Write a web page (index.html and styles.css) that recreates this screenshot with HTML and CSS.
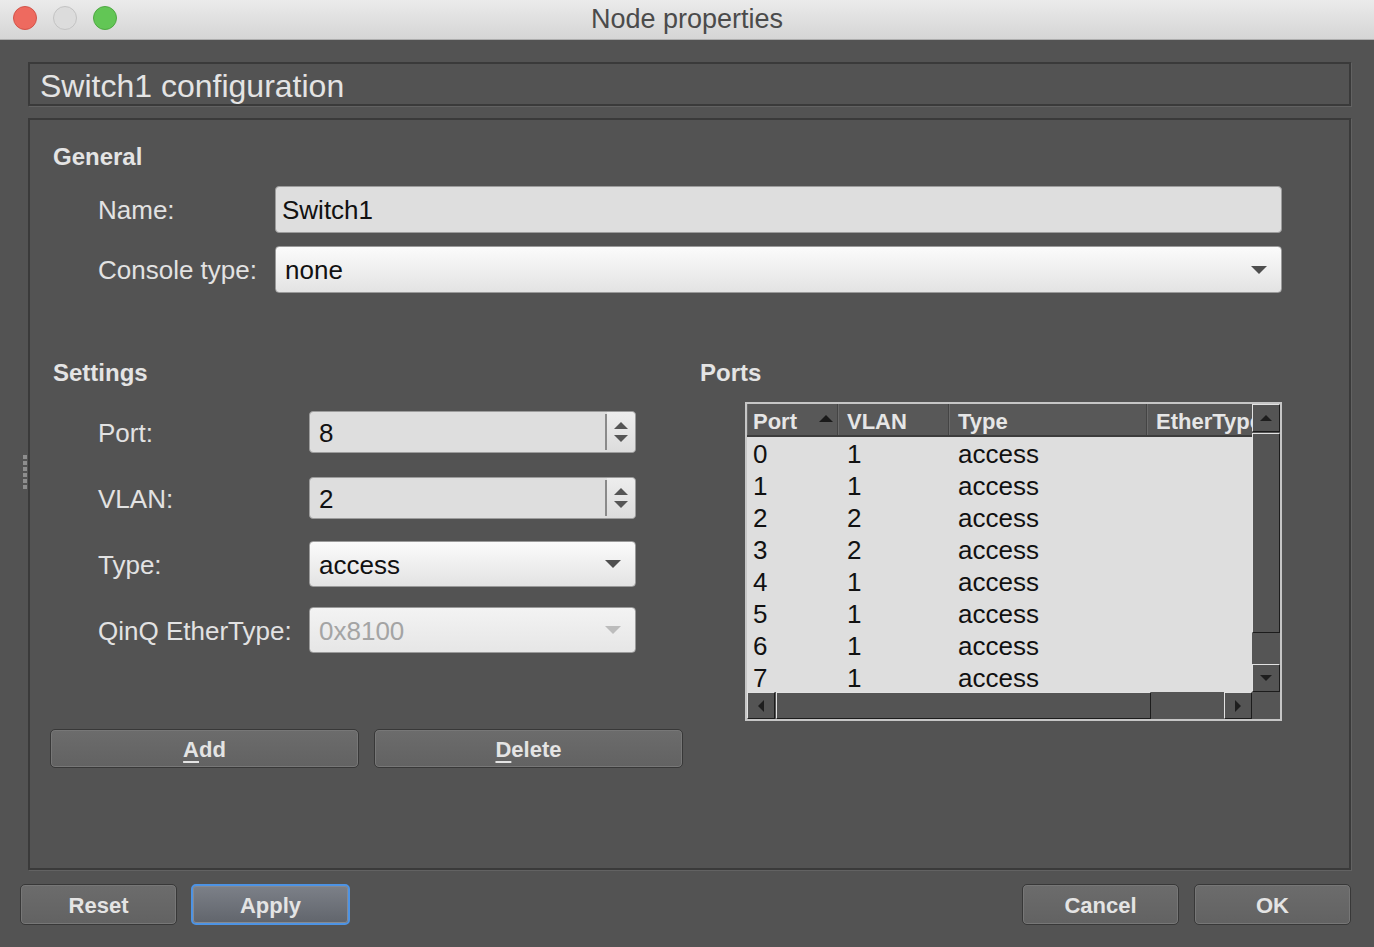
FILE: index.html
```html
<!DOCTYPE html>
<html>
<head>
<meta charset="utf-8">
<title>Node properties</title>
<link rel="stylesheet" href="styles.css">
</head>
<body>
<div class="window">
  <div class="titlebar">
    <div class="lights">
      <span class="light red"></span>
      <span class="light gray"></span>
      <span class="light green"></span>
    </div>
    <div class="wintitle">Node properties</div>
  </div>

  <div class="content">
    <div class="header">Switch1 configuration</div>

    <div class="mainbox">
      <span class="grip"></span>
      <div class="section-title">General</div>
      <div class="form-row general-row">
        <label class="lbl lbl-general">Name:</label>
        <div class="textfield wide">Switch1</div>
      </div>
      <div class="form-row general-row second">
        <label class="lbl lbl-general">Console type:</label>
        <div class="combo wide tall47"><span>none</span><i class="caret"></i></div>
      </div>

      <div class="settings">
        <div class="left-col">
          <div class="section-title">Settings</div>
          <div class="form-row s-row r-port">
            <label class="lbl lbl-set">Port:</label>
            <div class="spin"><span class="spin-val">8</span><span class="spin-btns"><i class="up"></i><i class="down"></i></span></div>
          </div>
          <div class="form-row s-row r-vlan">
            <label class="lbl lbl-set">VLAN:</label>
            <div class="spin"><span class="spin-val">2</span><span class="spin-btns"><i class="up"></i><i class="down"></i></span></div>
          </div>
          <div class="form-row s-row r-type">
            <label class="lbl lbl-set">Type:</label>
            <div class="combo small"><span>access</span><i class="caret"></i></div>
          </div>
          <div class="form-row s-row r-qinq">
            <label class="lbl lbl-set">QinQ EtherType:</label>
            <div class="combo small disabled"><span>0x8100</span><i class="caret"></i></div>
          </div>
          <div class="btn-row">
            <button class="btn wide-btn"><u>A</u>dd</button>
            <button class="btn wide-btn"><u>D</u>elete</button>
          </div>
        </div>

        <div class="right-col">
          <div class="section-title">Ports</div>
          <div class="table">
            <div class="tview">
              <div class="tmain">
                <div class="thead">
                  <div class="th c-port">Port<i class="sort"></i></div>
                  <div class="th c-vlan">VLAN</div>
                  <div class="th c-type">Type</div>
                  <div class="th c-eth">EtherType</div>
                </div>
                <div class="tbody">
                  <div class="tr"><span class="c-port">0</span><span class="c-vlan">1</span><span class="c-type">access</span></div>
                  <div class="tr"><span class="c-port">1</span><span class="c-vlan">1</span><span class="c-type">access</span></div>
                  <div class="tr"><span class="c-port">2</span><span class="c-vlan">2</span><span class="c-type">access</span></div>
                  <div class="tr"><span class="c-port">3</span><span class="c-vlan">2</span><span class="c-type">access</span></div>
                  <div class="tr"><span class="c-port">4</span><span class="c-vlan">1</span><span class="c-type">access</span></div>
                  <div class="tr"><span class="c-port">5</span><span class="c-vlan">1</span><span class="c-type">access</span></div>
                  <div class="tr"><span class="c-port">6</span><span class="c-vlan">1</span><span class="c-type">access</span></div>
                  <div class="tr"><span class="c-port">7</span><span class="c-vlan">1</span><span class="c-type">access</span></div>
                </div>
              </div>
              <div class="vscroll">
                <div class="sb-btn vbtn"><i class="tri t-up"></i></div>
                <div class="vthumb"></div>
                <div class="vtrough"></div>
                <div class="sb-btn vbtn"><i class="tri t-down"></i></div>
              </div>
            </div>
            <div class="hrow">
              <div class="hscroll">
                <div class="sb-btn hbtn"><i class="tri t-left"></i></div>
                <div class="hthumb"></div>
                <div class="htrough"></div>
                <div class="sb-btn hbtn"><i class="tri t-right"></i></div>
              </div>
              <div class="corner"></div>
            </div>
          </div>
        </div>
      </div>
    </div>

    <div class="footer">
      <div class="footer-left">
        <button class="btn foot-btn">Reset</button>
        <button class="btn foot-btn apply">Apply</button>
      </div>
      <div class="footer-right">
        <button class="btn foot-btn">Cancel</button>
        <button class="btn foot-btn">OK</button>
      </div>
    </div>
  </div>
</div>
</body>
</html>
```

FILE: styles.css
```css
* { box-sizing: border-box; }
html, body {
  margin: 0;
  padding: 0;
  width: 1374px;
  height: 947px;
  overflow: hidden;
  background: #535353;
  font-family: "Liberation Sans", Arial, sans-serif;
}
.window {
  width: 1374px;
  height: 947px;
  display: flex;
  flex-direction: column;
  background: #535353;
}
.titlebar {
  height: 40px;
  flex: none;
  position: relative;
  background: linear-gradient(#ebebeb, #d5d5d5);
  border-bottom: 1px solid #aeaeae;
  display: flex;
  align-items: center;
  justify-content: center;
}
.lights {
  position: absolute;
  left: 13px;
  top: 6px;
  display: flex;
  gap: 16px;
}
.light {
  width: 24px;
  height: 24px;
  border-radius: 50%;
  display: block;
}
.light.red { background: #ee6a5f; border: 1px solid #d2544a; }
.light.gray { background: #dcdcdc; border: 1px solid #c3c3c3; }
.light.green { background: #62c655; border: 1px solid #4fa843; }
.wintitle {
  font-size: 27px;
  color: #4b4b4b;
  margin-top: 0;
}

.content {
  flex: 1;
  display: flex;
  flex-direction: column;
  padding: 22px 23px 0 20px;
}
.header {
  margin-left: 8px;
  height: 44px;
  border: 2px solid #3a3a3a;
  box-shadow: 1px 1px 0 #626262;
  color: #e4e4e4;
  font-size: 32px;
  line-height: 40px;
  padding: 2px 0 0 10px;
}
.mainbox {
  position: relative;
  margin-left: 8px;
  margin-top: 12px;
  height: 752px;
  border: 2px solid #3a3a3a;
  box-shadow: 1px 1px 0 #626262;
  padding: 23px 67px 0 23px;
}
.grip {
  position: absolute;
  left: -7px;
  top: 335px;
  width: 4px;
  height: 34px;
  background: repeating-linear-gradient(#8e8e8e 0 4px, transparent 4px 6px);
}
.section-title {
  font-weight: bold;
  font-size: 24px;
  line-height: 28px;
  color: #e4e4e4;
}
.form-row {
  display: flex;
  align-items: center;
}
.lbl {
  color: #e2e2e2;
  font-size: 26px;
  padding: 2px 0 0 45px;
  flex: none;
}
.lbl-general { width: 222px; }
.lbl-set { width: 256px; }
.general-row { margin-top: 15px; height: 47px; }
.general-row.second { margin-top: 13px; }

.textfield {
  height: 47px;
  background: #dedede;
  border: 1px solid #9c9c9c;
  border-radius: 4px;
  font-size: 26px;
  color: #111;
  line-height: 45px;
  padding: 1px 0 0 6px;
}
.wide { flex: 1; }
.combo {
  position: relative;
  height: 46px;
  background: linear-gradient(#fbfbfb, #e3e3e3);
  border: 1px solid #9a9a9a;
  border-radius: 4px;
  font-size: 26px;
  color: #111;
  padding: 2px 0 0 9px;
  display: flex;
  align-items: center;
}
.combo.tall47 { height: 47px; }
.caret {
  position: absolute;
  right: 14px;
  top: 50%;
  margin-top: -4px;
  width: 0;
  height: 0;
  border-left: 8px solid transparent;
  border-right: 8px solid transparent;
  border-top: 8px solid #4e4e4e;
}
.combo.small { width: 327px; }
.combo.disabled {
  background: linear-gradient(#f3f3f3, #e6e6e6);
  color: #a4a4a4;
}
.combo.disabled .caret { border-top-color: #bcbcbc; }

.settings {
  display: flex;
  margin-top: 66px;
}
.left-col { width: 647px; flex: none; }
.right-col { flex: 1; }
.s-row { height: 46px; }
.r-port { margin-top: 24px; height: 42px; }
.r-vlan { margin-top: 24px; height: 42px; }
.r-type { margin-top: 22px; }
.r-qinq { margin-top: 20px; }

.spin {
  width: 327px;
  height: 42px;
  display: flex;
  background: #dedede;
  border: 1px solid #9c9c9c;
  border-radius: 4px;
}
.spin-val {
  flex: 1;
  font-size: 26px;
  color: #111;
  padding: 1px 0 0 9px;
  border-right: 2px solid #8a8a8a;
  margin: 2px 0;
  line-height: 36px;
}
.spin-btns {
  width: 28px;
  display: flex;
  flex-direction: column;
  align-items: center;
  justify-content: center;
  gap: 6px;
  background: linear-gradient(#ededed, #dcdcdc);
  border-radius: 0 4px 4px 0;
}
.spin-btns i {
  width: 0;
  height: 0;
  border-left: 7px solid transparent;
  border-right: 7px solid transparent;
}
.spin-btns .up { border-bottom: 7px solid #555; }
.spin-btns .down { border-top: 7px solid #555; }

.btn-row {
  display: flex;
  gap: 15px;
  margin-top: 76px;
  margin-left: -3px;
}
.btn {
  font-family: "Liberation Sans", Arial, sans-serif;
  font-weight: bold;
  font-size: 22px;
  color: #e4e4e4;
  background: linear-gradient(#6c6c6c, #626262);
  border: 1px solid #383838;
  border-radius: 5px;
  box-shadow: inset 0 0 0 1px #777;
  padding: 2px 0 0;
}
.btn u { text-decoration-thickness: 2px; text-underline-offset: 4px; }
.wide-btn { width: 309px; height: 39px; }

.table {
  margin-top: 15px;
  margin-left: 45px;
  width: 537px;
  height: 319px;
  border: 2px solid #c6c6c6;
  display: flex;
  flex-direction: column;
  background: #555;
}
.tview { display: flex; height: 288px; }
.tmain { flex: 1; overflow: hidden; background: #dedede; }
.thead {
  height: 33px;
  display: flex;
  background: #585858;
  border-bottom: 2px solid #3c3c3c;
  white-space: nowrap;
}
.th {
  position: relative;
  font-weight: bold;
  font-size: 22px;
  color: #e6e6e6;
  line-height: 31px;
  padding: 2px 0 0 5px;
  border-left: 1px solid #6a6a6a;
  border-right: 1px solid #444;
  flex: none;
}
.c-port { width: 91px; }
.c-vlan { width: 111px; padding-left: 8px; }
.c-type { width: 198px; padding-left: 8px; }
.c-eth { width: 140px; padding-left: 8px; }
.th.c-vlan, .th.c-type, .th.c-eth { padding-left: 8px; }
.sort {
  position: absolute;
  right: 4px;
  top: 11px;
  width: 0;
  height: 0;
  border-left: 7px solid transparent;
  border-right: 7px solid transparent;
  border-bottom: 7px solid #1a1a1a;
}
.tr {
  height: 32px;
  display: flex;
  font-size: 26px;
  color: #111;
  line-height: 32px;
  padding-top: 1px;
}
.tr span { flex: none; }
.tr .c-port { padding-left: 6px; }
.tr .c-vlan { padding-left: 9px; }
.tr .c-type { padding-left: 9px; }

.vscroll {
  width: 28px;
  flex: none;
  display: flex;
  flex-direction: column;
  background: #555;
}
.sb-btn {
  background: #545454;
  border-top: 1px solid #e2e2e2;
  border-left: 1px solid #e2e2e2;
  border-bottom: 1px solid #1c1c1c;
  border-right: 1px solid #1c1c1c;
  display: flex;
  align-items: center;
  justify-content: center;
  flex: none;
}
.vbtn { height: 28px; }
.vthumb {
  height: 200px;
  margin-top: 1px;
  background: #545454;
  border-top: 1px solid #e2e2e2;
  border-left: 1px solid #e2e2e2;
  border-bottom: 1px solid #1c1c1c;
  border-right: 1px solid #1c1c1c;
}
.vtrough { flex: 1; }
.tri { width: 0; height: 0; display: block; }
.t-up { border-left: 6px solid transparent; border-right: 6px solid transparent; border-bottom: 6px solid #1e1e1e; }
.t-down { border-left: 6px solid transparent; border-right: 6px solid transparent; border-top: 6px solid #1e1e1e; }
.t-left { border-top: 6px solid transparent; border-bottom: 6px solid transparent; border-right: 6px solid #1e1e1e; }
.t-right { border-top: 6px solid transparent; border-bottom: 6px solid transparent; border-left: 6px solid #1e1e1e; }

.hrow { display: flex; height: 27px; }
.hscroll { flex: 1; display: flex; background: #555; }
.hbtn { width: 28px; }
.hthumb {
  width: 375px;
  margin-left: 1px;
  background: #545454;
  border-top: 1px solid #e2e2e2;
  border-left: 1px solid #e2e2e2;
  border-bottom: 1px solid #1c1c1c;
  border-right: 1px solid #1c1c1c;
}
.htrough { flex: 1; }
.corner { width: 28px; background: #555; }

.footer {
  display: flex;
  justify-content: space-between;
  margin-top: 14px;
}
.footer-left, .footer-right { display: flex; gap: 14px; }
.footer-right { gap: 15px; }
.foot-btn { width: 157px; height: 41px; }
.foot-btn.apply {
  width: 159px;
  background: linear-gradient(#7c8088, #61656c);
  border: 2px solid #4d93e4;
  box-shadow: inset 0 0 0 1px #858a92;
}
```
